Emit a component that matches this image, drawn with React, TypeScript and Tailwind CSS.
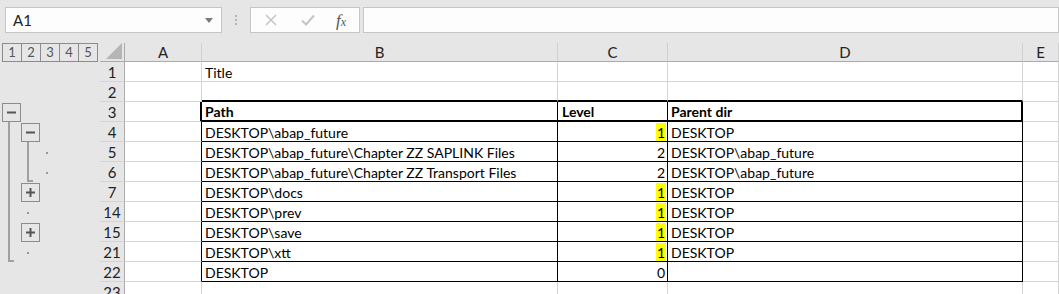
import React from "react";

const COLS = "grid-cols-[100px_25px_77px_356px_110px_355px_1fr]";

type Row = { n: number; b?: string; c?: string; d?: string; hl?: boolean; bold?: boolean };

const rows: Row[] = [
  { n: 1, b: "Title" },
  { n: 2 },
  { n: 3, b: "Path", c: "Level", d: "Parent dir", bold: true },
  { n: 4, b: "DESKTOP\\abap_future", c: "1", d: "DESKTOP", hl: true },
  { n: 5, b: "DESKTOP\\abap_future\\Chapter ZZ SAPLINK Files", c: "2", d: "DESKTOP\\abap_future" },
  { n: 6, b: "DESKTOP\\abap_future\\Chapter ZZ Transport Files", c: "2", d: "DESKTOP\\abap_future" },
  { n: 7, b: "DESKTOP\\docs", c: "1", d: "DESKTOP", hl: true },
  { n: 14, b: "DESKTOP\\prev", c: "1", d: "DESKTOP", hl: true },
  { n: 15, b: "DESKTOP\\save", c: "1", d: "DESKTOP", hl: true },
  { n: 21, b: "DESKTOP\\xtt", c: "1", d: "DESKTOP", hl: true },
  { n: 22, b: "DESKTOP", c: "0" },
  { n: 23 },
];

function OutlineTree() {
  const btn = "#8c8c8c";
  const line = "#a0a0a0";
  return (
    <svg width="100" height="192" viewBox="0 0 100 192">
      <line x1="9" y1="20" x2="9" y2="160" stroke={line} strokeWidth="2" />
      <line x1="8" y1="159" x2="14" y2="159" stroke={line} strokeWidth="2" />
      <line x1="28" y1="40" x2="28" y2="80" stroke={line} strokeWidth="2" />
      <line x1="27" y1="79" x2="33" y2="79" stroke={line} strokeWidth="2" />
      <rect x="2.5" y="1.5" width="18" height="18" fill="#e6e6e6" stroke={btn} />
      <line x1="7" y1="10.5" x2="16" y2="10.5" stroke="#555" strokeWidth="2" />
      <rect x="21.5" y="21.5" width="18" height="18" fill="#e6e6e6" stroke={btn} />
      <line x1="26" y1="30.5" x2="35" y2="30.5" stroke="#555" strokeWidth="2" />
      <rect x="21.5" y="81.5" width="18" height="18" fill="#e6e6e6" stroke={btn} />
      <line x1="26" y1="90.5" x2="35" y2="90.5" stroke="#555" strokeWidth="2" />
      <line x1="30.5" y1="86" x2="30.5" y2="95" stroke="#555" strokeWidth="2" />
      <rect x="21.5" y="121.5" width="18" height="18" fill="#e6e6e6" stroke={btn} />
      <line x1="26" y1="130.5" x2="35" y2="130.5" stroke="#555" strokeWidth="2" />
      <line x1="30.5" y1="126" x2="30.5" y2="135" stroke="#555" strokeWidth="2" />
      <rect x="46" y="50" width="2" height="2" fill="#999" />
      <rect x="46" y="70" width="2" height="2" fill="#999" />
      <rect x="27" y="110" width="2" height="2" fill="#999" />
      <rect x="27" y="150" width="2" height="2" fill="#999" />
    </svg>
  );
}

function FormulaBar() {
  return (
    <div className="flex h-[43px] items-start bg-[#e6e6e6] pt-[7px]">
      <div className="ml-[5px] flex h-[26px] w-[217px] items-center justify-between border border-[#c6c6c6] bg-[#fdfdfd] pl-[7px] pr-[8px] text-[15px] text-[#222]">
        <span>A1</span>
        <svg width="8" height="5" viewBox="0 0 8 5">
          <path d="M0 0 L8 0 L4 5 Z" fill="#7a7a7a" />
        </svg>
      </div>
      <div className="ml-[13px] mr-[13px] flex h-[26px] flex-col items-center justify-center gap-[2px]">
        <span className="h-[2px] w-[2px] bg-[#b4b4b4]" />
        <span className="h-[2px] w-[2px] bg-[#b4b4b4]" />
        <span className="h-[2px] w-[2px] bg-[#b4b4b4]" />
      </div>
      <div className="flex h-[26px] w-[110px] items-center border border-[#c6c6c6] bg-[#fdfdfd]">
        <svg className="ml-[14px]" width="12" height="12" viewBox="0 0 12 12">
          <path d="M1 1 L11 11 M11 1 L1 11" stroke="#c4c4c4" strokeWidth="1.5" />
        </svg>
        <svg className="ml-[24px]" width="14" height="12" viewBox="0 0 14 12">
          <path d="M1 6.5 L5 10.5 L13 1.5" stroke="#c4c4c4" strokeWidth="2" fill="none" />
        </svg>
        <span className="ml-[21px] font-['Liberation_Serif'] text-[17px] italic leading-none text-[#555]">
          f<span className="text-[12px]">x</span>
        </span>
      </div>
      <div className="ml-[3px] h-[26px] flex-1 border border-[#c6c6c6] bg-[#fdfdfd]" />
    </div>
  );
}

function Cell({
  children,
  className = "",
}: {
  children?: React.ReactNode;
  className?: string;
}) {
  return (
    <div className={`flex h-[20px] items-center overflow-visible whitespace-nowrap border-b border-r bg-white px-[3px] pt-[1px] text-[14px] text-black ${className}`}>
      {children}
    </div>
  );
}

export default function App() {
  return (
    <div className="h-[294px] w-[1059px] overflow-hidden bg-[#e6e6e6] font-['Lato','Liberation_Sans',sans-serif]">
      <FormulaBar />
      <div className={`grid ${COLS} auto-rows-[20px] grid-rows-[19px]`}>
        {/* header row */}
        <div className="flex h-[19px] items-center pl-[2px]">
          {[1, 2, 3, 4, 5].map((n) => (
            <div
              key={n}
              className="mr-[-1px] flex h-[19px] w-[20px] items-center justify-center border border-[#8c8c8c] text-[13px] text-[#555]"
            >
              {n}
            </div>
          ))}
        </div>
        <div className="relative h-[19px] border-b border-r border-[#ababab]">
          <svg className="absolute bottom-[2px] right-[2px]" width="16" height="16" viewBox="0 0 16 16">
            <path d="M16 0 L16 16 L0 16 Z" fill="#b5b5b5" />
          </svg>
        </div>
        {["A", "B", "C", "D", "E"].map((l) => (
          <div
            key={l}
            className="flex h-[19px] items-center justify-center border-b border-r border-b-[#ababab] border-r-[#d0d0d0] text-[15px] text-[#222]"
          >
            {l}
          </div>
        ))}

        {rows.map((r, i) => {
          const isHead = r.n === 3;
          const inBody = r.n >= 4 && r.n <= 22;
          const aBorder = isHead
            ? "border-b-[#d4d4d4] border-r-2 border-r-black"
            : inBody
              ? "border-b-[#d4d4d4] border-r-black"
              : "border-[#d4d4d4]";
          const tBorder = isHead
            ? "border-b-2 border-black"
            : inBody
              ? "border-black"
              : r.n === 2
                ? "border-b-2 border-b-black border-r-[#d4d4d4]"
                : "border-[#d4d4d4]";
          return (
            <React.Fragment key={r.n}>
              {i === 2 ? (
                <div className="row-span-10">
                  <OutlineTree />
                </div>
              ) : i < 2 ? (
                <div />
              ) : null}
              <div className="flex h-[20px] items-center justify-center border-b border-r border-b-[#d4d4d4] border-r-[#ababab] pt-[1px] text-[15px] text-[#222]">
                {r.n}
              </div>
              <Cell className={aBorder} />
              <Cell className={`${tBorder} ${r.bold ? "font-bold" : ""}`}>{r.b}</Cell>
              <Cell className={`${tBorder} ${r.bold ? "font-bold" : "justify-end pr-[1px]"}`}>
                {r.hl ? (
                  <span className="flex h-[18px] items-center bg-[#ffff00] px-[1px]">{r.c}</span>
                ) : (
                  <span className="px-[1px]">{r.c}</span>
                )}
              </Cell>
              <Cell className={`${tBorder} ${isHead ? "border-r-2" : ""} ${r.bold ? "font-bold" : ""}`}>{r.d}</Cell>
              <Cell className="border-[#d4d4d4]" />
            </React.Fragment>
          );
        })}
      </div>
    </div>
  );
}
